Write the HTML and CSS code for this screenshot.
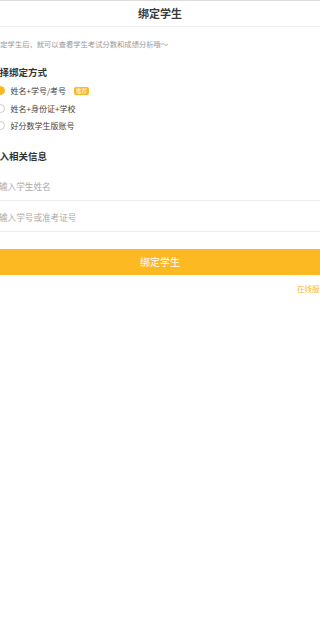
FILE: index.html
```html
<!DOCTYPE html>
<html lang="zh-CN">
<head>
  <meta charset="UTF-8" />
  <meta name="viewport" content="width=device-width, initial-scale=1.0" />
  <title>绑定学生</title>
  <link rel="stylesheet" href="styles.css">
</head>
<body>

  <header class="topbar">绑定学生</header>

  <div class="page">
    <p class="tip">绑定学生后，就可以查看学生考试分数和成绩分析哦～</p>

    <h2 class="title">选择绑定方式</h2>
    <ul class="ways">
      <li class="way checked"><span class="dot"></span>姓名+学号/考号<span class="badge">推荐</span></li>
      <li class="way"><span class="dot"></span>姓名+身份证+学校</li>
      <li class="way"><span class="dot"></span>好分数学生版账号</li>
    </ul>

    <h2 class="title title2">输入相关信息</h2>
    <div class="fields">
      <div class="field">输入学生姓名</div>
      <div class="field">输入学号或准考证号</div>
    </div>
  </div>

  <button class="bind">绑定学生</button>
  <div class="help"><span>在线服务</span></div>

</body>
</html>
```

FILE: styles.css
```css
body {
  margin: 0;
  width: 320px;
  overflow: hidden;
  font-family: "Noto Sans CJK SC", "Noto Sans", sans-serif;
  color: #333;
  background: #fff;
}

.topbar {
  height: 25px;
  line-height: 25px;
  border-top: 1px solid #ddd;
  border-bottom: 1px solid #eee;
  text-align: center;
  font-size: 11px;
  font-weight: bold;
  color: #3a3a3a;
}

.page {
  margin-left: -10px;
  width: 330px;
}

.tip {
  margin: 0;
  padding: 12px 0 0 3px;
  font-size: 7.3px;
  line-height: 10px;
  color: #999;
}

.title {
  margin: 0;
  padding-top: 17px;
  font-size: 9.5px;
  line-height: 12px;
  font-weight: bold;
  color: #333;
}

.title2 {
  padding-top: 15px;
}

.ways {
  list-style: none;
  margin: 0;
  padding: 4px 0 0 0;
}

.way {
  display: flex;
  align-items: center;
  height: 17.5px;
  font-size: 8px;
  color: #444;
}

.dot {
  box-sizing: border-box;
  width: 9px;
  height: 9px;
  margin: 0 6px 0 5.5px;
  border: 1px solid #ccc;
  border-radius: 50%;
}

.checked .dot {
  border-color: #fbb81f;
  background: #fbb81f;
}

.badge {
  margin-left: 8px;
  padding: 0 2px;
  height: 8px;
  line-height: 8px;
  font-size: 5.5px;
  color: #fff;
  background: #fbb81f;
  border-radius: 2px;
}

.fields {
  padding-top: 7px;
}

.field {
  height: 28px;
  line-height: 28px;
  padding: 3px 0 0 9px;
  margin-bottom: -1px;
  font-size: 8.6px;
  color: #aaa;
  border-bottom: 1px solid #eee;
}

.field + .field {
  margin-bottom: 0;
}

.bind {
  display: block;
  width: 320px;
  height: 26px;
  margin-top: 17px;
  border: 0;
  padding: 0;
  background: #fdb921;
  color: #fff;
  font-family: "Noto Sans CJK SC", sans-serif;
  font-size: 10px;
}

.help {
  width: 320px;
  white-space: nowrap;
  padding-top: 8px;
  font-size: 7.5px;
  color: #fbb81f;
}

.help span {
  margin-left: 297px;
}
```
